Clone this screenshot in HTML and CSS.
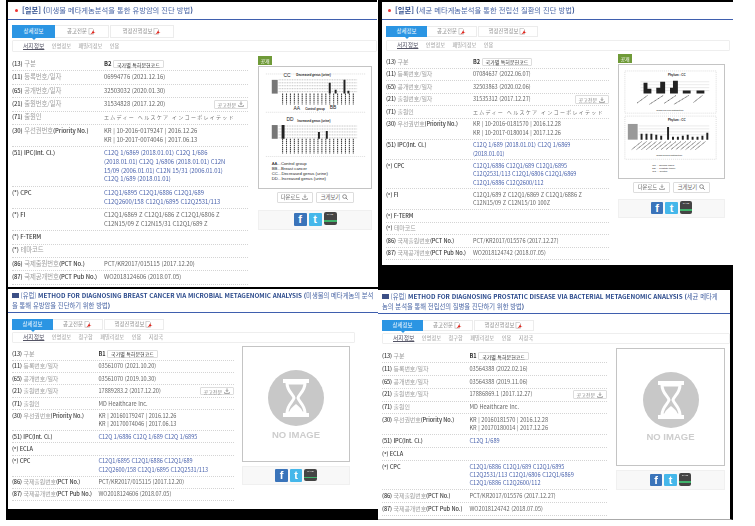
FILE: index.html
```html
<!DOCTYPE html>
<html lang="ko">
<head>
<meta charset="utf-8">
<title>특허 상세정보</title>
<link rel="stylesheet" href="styles.css">
</head>
<body>
<svg class="defs" aria-hidden="true">
  <symbol id="pdf" viewBox="0 0 10 9"><path d="M1 .5h4.500l1.500 1.500v6H1z" fill="#fff" stroke="#999" stroke-width=".6"/><path d="M3 8.500C5 6 6 4 6.500 2.500 7 5 8 6 9.800 6.500 7.500 6.500 5.500 7 3 8.500z" fill="#e2231a"/></symbol>
  <symbol id="down" viewBox="0 0 8 8"><path d="M4 .5v4M2.500 3 4 4.800 5.500 3M.8 5.500v1.700h6.400V5.500" fill="none" stroke="#666" stroke-width=".8"/></symbol>
  <symbol id="zoom" viewBox="0 0 8 8"><circle cx="3.400" cy="3.400" r="2.500" fill="none" stroke="#666" stroke-width=".9"/><path d="M5.200 5.200 7.500 7.500" stroke="#666" stroke-width="1.100"/></symbol>
  <symbol id="glass" viewBox="0 0 56 56"><circle cx="28" cy="28" r="28" fill="#c8c8c8"/><path d="M15 9h26v4H15zM15 43h26v4H15z" fill="#fff"/><path d="M19 13h18c0 8-6 11-7 15 1 4 7 7 7 15H19c0-8 6-11 7-15-1-4-7-7-7-15z" fill="none" stroke="#fff" stroke-width="3"/><path d="M21 43c1-5 5-7 7-9 2 2 6 4 7 9z" fill="#fff"/></symbol>
</svg>

<section class="win win-a"><div class="body">
  <h1 class="title"><i class="dot"></i><b>[일본]</b> <b>(</b>미생물 메타게놈분석을 통한 유방암의 진단 방법<b>)</b></h1>
  <nav class="tabs"><a class="tab t1 on">상세정보</a><a class="tab t2">공고전문 <svg class="ic"><use href="#pdf"/></svg></a><a class="tab t3">행정진행정보 <svg class="ic"><use href="#pdf"/></svg></a></nav>
  <nav class="sub"><a class="cur">서지정보</a><a>인명정보</a><a>패밀리정보</a><a>인용</a></nav>
  <div class="main">
    <div class="table">
      <div class="row"><div class="k"><b>(13)</b> 구분</div><div class="v"><b class="kind">B2</b><span class="btn">국가별 특허문헌코드</span></div></div>
      <div class="row"><div class="k"><b>(11)</b> 등록번호/일자</div><div class="v">06994776 (2021.12.16)</div></div>
      <div class="row"><div class="k"><b>(65)</b> 공개번호/일자</div><div class="v">32503032 (2020.01.30)</div></div>
      <div class="row"><div class="k"><b>(21)</b> 출원번호/일자</div><div class="v">31534828 (2017.12.20)<span class="btn end">공고전문 <svg class="ic-s"><use href="#down"/></svg></span></div></div>
      <div class="row"><div class="k"><b>(71)</b> 출원인</div><div class="v jp">エムディー ヘルスケア インコーポレイテッド</div></div>
      <div class="row"><div class="k"><b>(30)</b> 우선권번호<b>(Priority No.)</b></div><div class="v">KR | 10-2016-0179247 | 2016.12.26<br>KR | 10-2017-0074046 | 2017.06.13</div></div>
      <div class="row"><div class="k"><b>(51) IPC(Int. Cl.)</b></div><div class="v link">C12Q 1/6869 (2018.01.01) C12Q 1/686<br>(2018.01.01) C12Q 1/6806 (2018.01.01) C12N<br>15/09 (2006.01.01) C12N 15/31 (2006.01.01)<br>C12Q 1/689 (2018.01.01)</div></div>
      <div class="row"><div class="k"><b>(*) CPC</b></div><div class="v link">C12Q1/6895 C12Q1/6886 C12Q1/689<br>C12Q2600/158 C12Q1/6895 C12Q2531/113</div></div>
      <div class="row"><div class="k"><b>(*) FI</b></div><div class="v">C12Q1/6869 Z C12Q1/686 Z C12Q1/6806 Z<br>C12N15/09 Z C12N15/31 C12Q1/689 Z</div></div>
      <div class="row"><div class="k"><b>(*) F-TERM</b></div><div class="v"></div></div>
      <div class="row"><div class="k"><b>(*)</b> 테마코드</div><div class="v"></div></div>
      <div class="row"><div class="k"><b>(86)</b> 국제출원번호<b>(PCT No.)</b></div><div class="v">PCT/KR2017/015115 (2017.12.20)</div></div>
      <div class="row"><div class="k"><b>(87)</b> 국제공개번호<b>(PCT Pub No.)</b></div><div class="v">WO2018124606 (2018.07.05)</div></div>
    </div>
    <aside class="side">
      <span class="badge">공개</span>
      <div class="figure">
        <svg class="fig" viewBox="0 0 114 123">
          <g class="noise"><path d="M20 13H100M20 16H100M20 19H100M20 22H100M20 25H100"/></g>
          <rect x="13" y="13" width="6" height="14" fill="#777"/>
          <path d="M24 27V38M28 27V38M32 27V38M36 27V38M40 27V38M44 27V38M48 27V38M52 27V38M56 27V38M60 27V38M64 27V38M68 27V38M72 27V38M76 27V38M80 27V38M84 27V38M88 27V38M92 27V38M96 27V38" class="ticks"/>
          <path d="M71 16h2v11h-2zM77 23h2v4h-2zM86 13h2v14h-2zM90 24h2v3h-2z" fill="#222"/>
          <path d="M7 7H108M7 46H108M7 91H108" class="dots"/>
          <text x="25" y="10" class="f5">CC</text><text x="38" y="9.500" class="f3">Decreased genus (urine)</text>
          <text x="35" y="44" class="f5">AA</text><text x="47" y="43.500" class="f3">Control group</text><text x="72" y="43" class="f5">BB</text>
          <g class="noise"><path d="M20 60H100M20 63H100M20 66H100M20 69H100M20 72H100"/></g>
          <rect x="13" y="59" width="6" height="14" fill="#777"/>
          <path d="M24 73V88M28 73V88M32 73V88M36 73V88M40 73V88M44 73V88M48 73V88M52 73V88M56 73V88M60 73V88M64 73V88M68 73V88M72 73V88M76 73V88M80 73V88M84 73V88M88 73V88M92 73V88M96 73V88" class="ticks"/>
          <path d="M23 59h3v14h-3zM60 66h2v7h-2zM68 65h2v8h-2z" fill="#222"/>
          <text x="28" y="55" class="f5">DD</text><text x="39" y="55.500" class="f3">Increased genus (urine)</text>
          <text x="13" y="100" class="f4">AA...Control group</text><text x="13" y="105" class="f4">BB...Breast cancer</text><text x="13" y="110" class="f4">CC...Decreased genus (urine)</text><text x="13" y="115" class="f4">DD...Increased genus (urine)</text>
        </svg>
      </div>
      <div class="btns"><span class="btn big">다운로드 <svg class="ic-s"><use href="#down"/></svg></span><span class="btn big">크게보기 <svg class="ic-s"><use href="#zoom"/></svg></span></div>
      <div class="share"><span class="soc fb">f</span><span class="soc tw">t</span><span class="soc save">SAVE</span></div>
    </aside>
  </div>
</div></section>

<section class="win win-b"><div class="body">
  <h1 class="title"><i class="dot"></i><b>[일본]</b> <b>(</b>세균 메타게놈분석을 통한 전립선 질환의 진단 방법<b>)</b></h1>
  <nav class="tabs"><a class="tab t1 on">상세정보</a><a class="tab t2">공고전문 <svg class="ic"><use href="#pdf"/></svg></a><a class="tab t3">행정진행정보 <svg class="ic"><use href="#pdf"/></svg></a></nav>
  <nav class="sub"><a class="cur">서지정보</a><a>인명정보</a><a>패밀리정보</a><a>인용</a></nav>
  <div class="main">
    <div class="table">
      <div class="row"><div class="k"><b>(13)</b> 구분</div><div class="v"><b class="kind">B2</b><span class="btn">국가별 특허문헌코드</span></div></div>
      <div class="row"><div class="k"><b>(11)</b> 등록번호/일자</div><div class="v">07084637 (2022.06.07)</div></div>
      <div class="row"><div class="k"><b>(65)</b> 공개번호/일자</div><div class="v">32503863 (2020.02.06)</div></div>
      <div class="row"><div class="k"><b>(21)</b> 출원번호/일자</div><div class="v">31535312 (2017.12.27)<span class="btn end">공고전문 <svg class="ic-s"><use href="#down"/></svg></span></div></div>
      <div class="row"><div class="k"><b>(71)</b> 출원인</div><div class="v jp">エムディー ヘルスケア インコーポレイテッド</div></div>
      <div class="row"><div class="k"><b>(30)</b> 우선권번호<b>(Priority No.)</b></div><div class="v">KR | 10-2016-0181570 | 2016.12.28<br>KR | 10-2017-0180014 | 2017.12.26</div></div>
      <div class="row"><div class="k"><b>(51) IPC(Int. Cl.)</b></div><div class="v link">C12Q 1/689 (2018.01.01) C12Q 1/6869<br>(2018.01.01)</div></div>
      <div class="row"><div class="k"><b>(*) CPC</b></div><div class="v link">C12Q1/6886 C12Q1/689 C12Q1/6895<br>C12Q2531/113 C12Q1/6806 C12Q1/6869<br>C12Q1/6886 C12Q2600/112</div></div>
      <div class="row"><div class="k"><b>(*) FI</b></div><div class="v">C12Q1/689 Z C12Q1/6869 Z C12Q1/6886 Z<br>C12N15/09 Z C12N15/10 100Z</div></div>
      <div class="row"><div class="k"><b>(*) F-TERM</b></div><div class="v"></div></div>
      <div class="row"><div class="k"><b>(*)</b> 테마코드</div><div class="v"></div></div>
      <div class="row"><div class="k"><b>(86)</b> 국제출원번호<b>(PCT No.)</b></div><div class="v">PCT/KR2017/015576 (2017.12.27)</div></div>
      <div class="row"><div class="k"><b>(87)</b> 국제공개번호<b>(PCT Pub No.)</b></div><div class="v">WO2018124742 (2018.07.05)</div></div>
    </div>
    <aside class="side">
      <span class="badge">공개</span>
      <div class="figure">
        <svg class="fig" viewBox="0 0 107 115">
          <path d="M6 6H99V49H6zM6 52H99V96H6z" class="dots"/>
          <text x="50" y="11" class="f3">Phylum : CC</text>
          <path d="M22 17H92M22 20H92M22 23H92M22 26H92" class="rule"/>
          <path d="M25 18h4v6h4v5h-8zM38 23h4v-6h5v12h-9zM52 23h3v-7h5v13h-8zM65 26h8v3h-8zM79 26h8v3h-8z" fill="#222"/>
          <path d="M29 31 18 39M45 31 31 40M58 31 46 39M71 31 56 40M85 31 76 38" class="slant"/>
          <text x="38" y="47" class="f2">Class phylum distribution</text>
          <text x="50" y="57" class="f3">Phylum : CC</text>
          <rect x="9" y="60" width="10" height="16" fill="#999"/>
          <path d="M20 62H92M20 65H92M20 68H92M20 71H92" class="rule"/>
          <path d="M22 70h2v6h-2zM27 70h2v6h-2zM32 70h2v6h-2zM37 71h2v5h-2zM42 72h2v4h-2zM49 63h2v13h-2zM54 73h2v3h-2zM59 73h2v3h-2zM64 72h2v4h-2zM69 71h2v5h-2zM74 73h2v3h-2zM79 73h2v3h-2zM84 72h2v4h-2zM89 69h2v7h-2z" fill="#222"/>
          <path d="M23 78 13 86M28 78 18 86M33 78 23 86M38 78 28 86M43 78 33 86M48 78 38 86M53 78 43 86M58 78 48 86M63 78 53 86M68 78 58 86M73 78 63 86M78 78 68 86M83 78 73 86M88 78 78 86" class="slant"/>
          <text x="38" y="93" class="f2">Class genus distribution</text>
          <text x="34" y="103" class="f2">CC ... Normal cases</text><text x="34" y="106" class="f2">DD ... Prostate tumor</text><text x="34" y="109" class="f2">GG ... Control</text>
        </svg>
      </div>
      <div class="btns"><span class="btn big">다운로드 <svg class="ic-s"><use href="#down"/></svg></span><span class="btn big">크게보기 <svg class="ic-s"><use href="#zoom"/></svg></span></div>
      <div class="share"><span class="soc fb">f</span><span class="soc tw">t</span><span class="soc save">SAVE</span></div>
    </aside>
  </div>
</div></section>

<section class="win win-c"><div class="body">
  <h1 class="title"><i class="flag"></i>[유럽] <b>METHOD FOR DIAGNOSING BREAST CANCER VIA MICROBIAL METAGENOMIC ANALYSIS (</b>미생물의 메타게놈의 분석<br>을 통해 유방암을 진단하기 위한 방법<b>)</b></h1>
  <nav class="tabs"><a class="tab t1 on">상세정보</a><a class="tab t2">공고전문 <svg class="ic"><use href="#pdf"/></svg></a><a class="tab t3">행정진행정보 <svg class="ic"><use href="#pdf"/></svg></a></nav>
  <nav class="sub"><a class="cur">서지정보</a><a>인명정보</a><a>청구항</a><a>패밀리정보</a><a>인용</a><a>지정국</a></nav>
  <div class="main">
    <div class="table">
      <div class="row"><div class="k"><b>(13)</b> 구분</div><div class="v"><b class="kind">B1</b><span class="btn">국가별 특허문헌코드</span></div></div>
      <div class="row"><div class="k"><b>(11)</b> 등록번호/일자</div><div class="v">03561070 (2021.10.20)</div></div>
      <div class="row"><div class="k"><b>(65)</b> 공개번호/일자</div><div class="v">03561070 (2019.10.30)</div></div>
      <div class="row"><div class="k"><b>(21)</b> 출원번호/일자</div><div class="v">17889283.2 (2017.12.20)<span class="btn end">공고전문 <svg class="ic-s"><use href="#down"/></svg></span></div></div>
      <div class="row"><div class="k"><b>(71)</b> 출원인</div><div class="v">MD Healthcare Inc.</div></div>
      <div class="row"><div class="k"><b>(30)</b> 우선권번호<b>(Priority No.)</b></div><div class="v">KR | 20160179247 | 2016.12.26<br>KR | 20170074046 | 2017.06.13</div></div>
      <div class="row"><div class="k"><b>(51) IPC(Int. Cl.)</b></div><div class="v link">C12Q 1/6886 C12Q 1/689 C12Q 1/6895</div></div>
      <div class="row"><div class="k"><b>(*) ECLA</b></div><div class="v"></div></div>
      <div class="row"><div class="k"><b>(*) CPC</b></div><div class="v link">C12Q1/6895 C12Q1/6886 C12Q1/689<br>C12Q2600/158 C12Q1/6895 C12Q2531/113</div></div>
      <div class="row"><div class="k"><b>(86)</b> 국제출원번호<b>(PCT No.)</b></div><div class="v">PCT/KR2017/015115 (2017.12.20)</div></div>
      <div class="row"><div class="k"><b>(87)</b> 국제공개번호<b>(PCT Pub No.)</b></div><div class="v">WO2018124606 (2018.07.05)</div></div>
    </div>
    <aside class="side">
      <div class="figure noimg"><svg class="hourglass"><use href="#glass"/></svg><span class="none">NO IMAGE</span></div>
      <div class="share"><span class="soc fb">f</span><span class="soc tw">t</span><span class="soc save">SAVE</span></div>
    </aside>
  </div>
</div></section>

<section class="win win-d"><div class="body">
  <h1 class="title"><i class="flag"></i>[유럽] <b>METHOD FOR DIAGNOSING PROSTATIC DISEASE VIA BACTERIAL METAGENOMIC ANALYSIS (</b>세균 메타게<br>놈의 분석을 통해 전립선의 질병을 진단하기 위한 방법<b>)</b></h1>
  <nav class="tabs"><a class="tab t1 on">상세정보</a><a class="tab t2">공고전문 <svg class="ic"><use href="#pdf"/></svg></a><a class="tab t3">행정진행정보 <svg class="ic"><use href="#pdf"/></svg></a></nav>
  <nav class="sub"><a class="cur">서지정보</a><a>인명정보</a><a>청구항</a><a>패밀리정보</a><a>인용</a><a>지정국</a></nav>
  <div class="main">
    <div class="table">
      <div class="row"><div class="k"><b>(13)</b> 구분</div><div class="v"><b class="kind">B1</b><span class="btn">국가별 특허문헌코드</span></div></div>
      <div class="row"><div class="k"><b>(11)</b> 등록번호/일자</div><div class="v">03564388 (2022.02.16)</div></div>
      <div class="row"><div class="k"><b>(65)</b> 공개번호/일자</div><div class="v">03564388 (2019.11.06)</div></div>
      <div class="row"><div class="k"><b>(21)</b> 출원번호/일자</div><div class="v">17886869.1 (2017.12.27)<span class="btn end">공고전문 <svg class="ic-s"><use href="#down"/></svg></span></div></div>
      <div class="row"><div class="k"><b>(71)</b> 출원인</div><div class="v">MD Healthcare Inc.</div></div>
      <div class="row"><div class="k"><b>(30)</b> 우선권번호<b>(Priority No.)</b></div><div class="v">KR | 20160181570 | 2016.12.28<br>KR | 20170180014 | 2017.12.26</div></div>
      <div class="row"><div class="k"><b>(51) IPC(Int. Cl.)</b></div><div class="v link">C12Q 1/689</div></div>
      <div class="row"><div class="k"><b>(*) ECLA</b></div><div class="v"></div></div>
      <div class="row"><div class="k"><b>(*) CPC</b></div><div class="v link">C12Q1/6886 C12Q1/689 C12Q1/6895<br>C12Q2531/113 C12Q1/6806 C12Q1/6869<br>C12Q1/6886 C12Q2600/112</div></div>
      <div class="row"><div class="k"><b>(86)</b> 국제출원번호<b>(PCT No.)</b></div><div class="v">PCT/KR2017/015576 (2017.12.27)</div></div>
      <div class="row"><div class="k"><b>(87)</b> 국제공개번호<b>(PCT Pub No.)</b></div><div class="v">WO2018124742 (2018.07.05)</div></div>
    </div>
    <aside class="side">
      <div class="figure noimg"><svg class="hourglass"><use href="#glass"/></svg><span class="none">NO IMAGE</span></div>
      <div class="share"><span class="soc fb">f</span><span class="soc tw">t</span><span class="soc save">SAVE</span></div>
    </aside>
  </div>
</div></section>
</body>
</html>
```
FILE: styles.css
```css
* { box-sizing: border-box; }
html, body { margin: 0; height: 100%; }
body {
  position: relative;
  width: 755px;
  height: 526px;
  overflow: hidden;
  background: #fff;
  font-family: "Noto Sans CJK KR", "Noto Sans", sans-serif;
  color: #555;
}
.defs { display: none; }

/* The four screenshots sit on a free canvas, each with its black crop frame */
.win { position: absolute; overflow: hidden; border: 0 solid #000; background: #fff; }
.win-a {
  left: 6px; top: 0; width: 371px; height: 289px;
  border-width: 2px 0 2px 2px;
  --fs: 5.9px; --lh: 8.8px; --pad: 1.8px; --hang: 6.4px;
  --title-h: 15px; --title-lh: 13px; --title-fs: 7.3px;
  --lead: 5px; --tabs-x: 4px; --tabs-top: 5px; --tab-h: 13px;
  --t1: 43px; --t2: 54px; --t3: 64px; --sub-h: 12px; --sub-top: 2px; --sub-r: 0px;
  --main-top: 6px; --table-w: 236px; --key-w: 92px; --gap: 10px; --side-w: 114px;
  --fig-h: 123px; --share-h: 20px; --share-top: 7px; --btn-w: 36px; --soc: 13px;
}
.win-b {
  left: 378px; top: 0; width: 355px; height: 290px;
  border-width: 2px 0 25px 4px;
  --fs: 5.55px; --lh: 8.3px; --pad: 1.6px; --hang: 6px;
  --title-h: 15px; --title-lh: 13px; --title-fs: 7.3px;
  --lead: 4px; --tabs-x: 4px; --tabs-top: 6px; --tab-h: 11px;
  --t1: 41px; --t2: 50px; --t3: 60px; --sub-h: 11px; --sub-top: 3px; --sub-r: 3px;
  --main-top: 5px; --table-w: 223px; --key-w: 87px; --gap: 9px; --side-w: 107px;
  --fig-h: 115px; --share-h: 19px; --share-top: 6px; --btn-w: 37px; --soc: 12.5px;
}
.win-c {
  left: 6px; top: 287px; width: 372px; height: 233px;
  border-width: 2px 0 11px 2px;
  --fs: 5.55px; --lh: 8.3px; --pad: 1.55px; --hang: 6px;
  --title-h: 21px; --title-lh: 9.5px; --title-fs: 6.3px;
  --lead: 4px; --tabs-x: 4px; --tabs-top: 6px; --tab-h: 11px;
  --t1: 41px; --t2: 50px; --t3: 60px; --sub-h: 11px; --sub-top: 2px; --sub-r: 23px;
  --main-top: 5px; --table-w: 222px; --key-w: 86.5px; --gap: 8px; --side-w: 108px;
  --fig-h: 116px; --share-h: 19px; --share-top: 4px; --btn-w: 36px; --soc: 12.5px;
}
.win-d {
  left: 378px; top: 290px; width: 355px; height: 230px;
  border-width: 0 3px 1px 0;
  border-bottom-color: #aaa;
  --fs: 5.6px; --lh: 8.3px; --pad: 1.75px; --hang: 6px;
  --title-h: 21px; --title-lh: 9.5px; --title-fs: 6.3px;
  --lead: 4px; --tabs-x: 4px; --tabs-top: 6px; --tab-h: 11px;
  --t1: 41px; --t2: 50px; --t3: 60px; --sub-h: 11px; --sub-top: 2px; --sub-r: 0px;
  --main-top: 6px; --table-w: 225px; --key-w: 87.5px; --gap: 9px; --side-w: 109px;
  --fig-h: 118px; --share-h: 20px; --share-top: 4px; --btn-w: 36px; --soc: 12.5px;
}
.body { height: 100%; filter: blur(.35px); font-size: var(--fs); line-height: var(--lh); }

/* title */
.title {
  height: var(--title-h);
  margin: 0;
  padding: 2px 0 0 var(--lead);
  border-bottom: 1px solid #3f5fae;
  font-size: var(--title-fs);
  line-height: var(--title-lh);
  font-weight: 400;
  color: #4a66a5;
  white-space: nowrap;
  box-sizing: content-box;
}
.title b { font-weight: 700; color: #2b4a8c; }
.dot { display: inline-block; width: 3px; height: 3px; margin: 0 4px 1px 2px; border-radius: 50%; background: #e33; }
.flag { display: inline-block; width: 7px; height: 5px; margin-right: 1.5px; background: #3c4f86; }

/* tabs */
.tabs { display: flex; margin: var(--tabs-top) 0 0 var(--tabs-x); height: var(--tab-h); }
.tab {
  display: flex; align-items: center; justify-content: center; gap: 1px;
  border: 1px solid #ececec; border-left: 0;
  color: #888; font-size: 5.4px; white-space: nowrap;
}
.t1 { width: var(--t1); }
.t2 { width: var(--t2); }
.t3 { width: var(--t3); margin-left: 1px; border-left: 1px solid #ececec; }
.tab.on { background: #2b95e3; color: #fff; border: 0; position: relative; }
.tab.on::after {
  content: ""; position: absolute; left: 50%; bottom: -2px; margin-left: -2px;
  border: 2px solid transparent; border-bottom: 0; border-top-color: #2b95e3;
}
.ic { width: 8px; height: 7px; }
.ic-s { width: 6px; height: 6px; flex: none; }

.sub {
  display: flex; align-items: center; gap: 7.5px;
  height: var(--sub-h);
  margin: var(--sub-top) var(--sub-r) 0 var(--tabs-x);
  padding-left: 10px;
  border: 1px solid #eee; border-radius: 1px;
  color: #999; font-size: 5.2px;
}
.cur { color: #556; text-decoration: underline; font-size: 5.8px; }

/* body columns */
.main { display: flex; align-items: flex-start; gap: var(--gap); margin: var(--main-top) 0 0 var(--tabs-x); }
.table { width: var(--table-w); flex: none; }
.row {
  display: flex;
  padding: var(--pad) 0;
  border-bottom: 1px dotted #d4d4d4;
}
.k { width: var(--key-w); flex: none; color: #a0a0a0; font-size: var(--hang); white-space: nowrap; letter-spacing: -.1px; }
.k b { color: #3a3a3a; font-weight: 500; font-size: var(--fs); line-height: 1; }
.v { flex: 1; display: flex; align-items: center; min-height: var(--lh); white-space: nowrap; color: #666; }
.v.link { color: #4a63ad; display: block; }
.row:nth-child(6) .v, .row:nth-child(9) .v { display: block; }
.jp { letter-spacing: 1.3px; font-size: 5px; color: #777; }
.kind { color: #333; margin-right: 1.5px; font-weight: 700; }
.btn {
  display: inline-flex; align-items: center; justify-content: center; gap: 2px;
  height: 8.5px; padding: 0 3px;
  border: 1px solid #ddd; border-radius: 1px;
  background: #fff; color: #666; font-size: 5px; line-height: 7px; white-space: nowrap;
}
.row:first-child .btn { color: #333; }
.end { margin-left: auto; color: #888; }

/* figure column */
.side { width: var(--side-w); flex: none; display: flex; flex-direction: column; margin-top: -2px; }
.badge { width: 14px; height: 9px; margin-bottom: 1px; background: #6f9a38; color: #fff; font-size: 5px; line-height: 9px; text-align: center; }
.figure { position: relative; height: var(--fig-h); border: 1px solid #c4c4c4; background: #fff; }
.fig { display: block; width: 100%; height: 100%; }
.noise path { stroke: #bbb; stroke-width: .9; stroke-dasharray: 1 .7; fill: none; }
.ticks { stroke: #444; stroke-width: 1.1; stroke-dasharray: 1.4 .6; fill: none; }
.dots { stroke: #bbb; stroke-width: .5; stroke-dasharray: 1 1; fill: none; }
.rule { stroke: #ccc; stroke-width: .4; fill: none; }
.slant { stroke: #555; stroke-width: .9; stroke-dasharray: 1.2 .5; fill: none; }
.fig text { fill: #222; font-family: "Liberation Sans", sans-serif; }
.f2 { font-size: 2.5px; }
.f3 { font-size: 3px; font-weight: 700; }
.f4 { font-size: 4.3px; }
.f5 { font-size: 5px; }

.btns { display: flex; justify-content: center; gap: 3px; margin-top: 3px; }
.big { width: var(--btn-w); height: 10.5px; padding: 0; font-size: 5.3px; }
.win-a .big:last-child { width: 38px; }

.share {
  display: flex; align-items: center; justify-content: center; gap: 2px;
  height: var(--share-h); margin-top: var(--share-top);
  border: 1px solid #f0f0f0; background: #f8f8f8;
}
.soc {
  display: flex; align-items: center; justify-content: center;
  width: var(--soc); height: var(--soc); border-radius: 1px;
  color: #fff; font-family: "Liberation Sans", sans-serif; font-weight: 700; font-size: 11px; line-height: 1;
}
.fb { background: #3a74ba; }
.tw { background: #45b7ea; }
.save {
  margin-top: -1.5px;
  background: linear-gradient(#444 0 65%, #3fb36b 65% 78%, #444 78%);
  border-radius: 2px; font-size: 2.5px; font-weight: 400; align-items: flex-start; padding-top: 2px;
}

.noimg { display: flex; flex-direction: column; align-items: center; padding-top: 23px; }
.hourglass { width: 56px; height: 56px; }
.none { margin-top: 3px; font-family: "Liberation Sans", sans-serif; font-size: 9.5px; line-height: 12px; font-weight: 700; color: #cdcdcd; }
```
